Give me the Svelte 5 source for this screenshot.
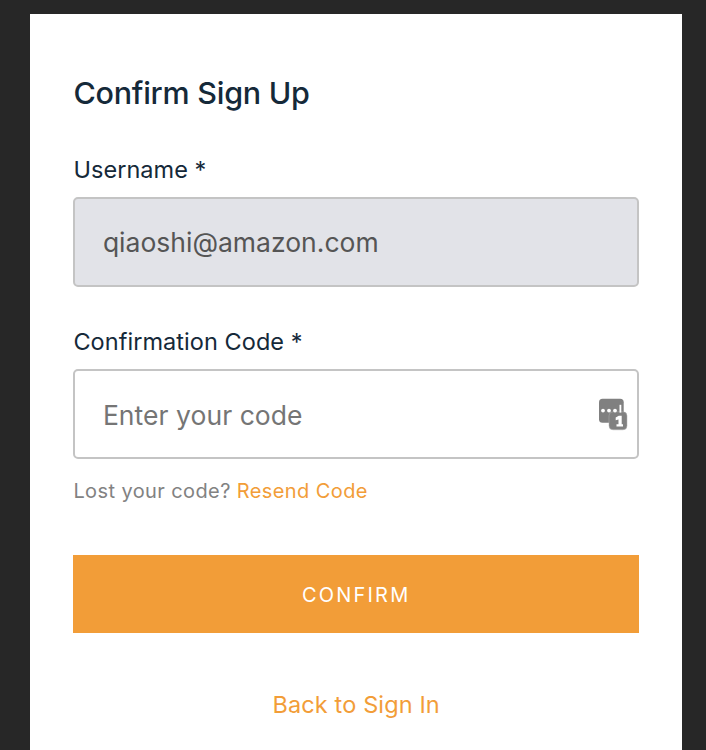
<script>
  let username = $state('qiaoshi@amazon.com');
  let code = $state('');
</script>

<main class="backdrop">
  <form class="card" onsubmit={(e) => e.preventDefault()}>
    <h1>Confirm Sign Up</h1>

    <label for="username">Username *</label>
    <div class="field disabled">
      <input id="username" bind:value={username} disabled />
    </div>

    <label for="code" class="second">Confirmation Code *</label>
    <div class="field">
      <input id="code" class="code" bind:value={code} placeholder="Enter your code" />
      <svg class="manager" width="30" height="34" viewBox="0 0 30 34" aria-hidden="true">
        <rect x="1" y="1.700" width="24.700" height="24" rx="3.500" fill="#808080" />
        <rect x="11" y="14.800" width="18" height="18" rx="4" fill="#808080" stroke="#b0b0b0" stroke-width="0.500" />
        <g fill="#fff">
          <circle cx="5" cy="13.600" r="1.900" />
          <circle cx="11" cy="13.600" r="1.900" />
          <circle cx="17" cy="13.600" r="1.900" />
          <rect x="21.500" y="7.800" width="1.800" height="7.800" />
          <path d="M20.800 18.800H23.700V27.200H25V29.500H18.500V27.200H20.500V22.500L17.700 23.300V20.600Z" />
        </g>
      </svg>
    </div>

    <p class="hint"><span>Lost your code?</span><a href="#resend">Resend Code</a></p>
    <button type="submit">CONFIRM</button>
    <a class="back" href="#signin">Back to Sign In</a>
  </form>
</main>

<style>
  :global(body) { margin: 0; overflow: hidden; background: #272727; }
  .backdrop {
    box-sizing: border-box;
    height: 750px;
    padding: 14px 24px 0 30px;
    background: #272727;
    font-family: Inter, "Liberation Sans", sans-serif;
  }
  .card {
    box-sizing: border-box;
    height: 736px;
    padding: 57px 43px 0 43.4px;
    display: flex;
    flex-direction: column;
    background: #fff;
    color: #152939;
  }
  h1 {
    margin: 0 0 40px;
    font-size: 30.5px;
    line-height: 44px;
    font-weight: 500;
    letter-spacing: -0.25px;
    white-space: nowrap;
  }
  label {
    height: 30px;
    font-size: 23.5px;
    line-height: 30px;
    letter-spacing: 0.05px;
    margin-bottom: 12px;
    white-space: nowrap;
  }
  .second { margin-top: 40px; }
  .field {
    box-sizing: border-box;
    height: 90px;
    display: flex;
    align-items: center;
    padding: 0 9px 0 27.5px;
    border: 2px solid #c4c4c4;
    border-radius: 5px;
  }
  .disabled { background: #e2e3e8; }
  input {
    flex: 1;
    min-width: 0;
    height: 60px;
    padding: 0;
    border: 0;
    outline: 0;
    background: transparent;
    font: 400 26.5px/60px Inter, "Liberation Sans", sans-serif;
    color: #555;
  }
  .code { margin-top: 2px; letter-spacing: 0.05px; }
  input::placeholder { color: #757575; opacity: 1; }
  .manager { flex: none; }
  .hint {
    margin: 17px 0 0;
    height: 30px;
    display: flex;
    gap: 6px;
    font-size: 20px;
    line-height: 30px;
    letter-spacing: 0.4px;
    color: #828282;
    white-space: nowrap;
  }
  a { color: #f29d38; text-decoration: none; }
  button {
    flex: none;
    height: 78px;
    margin: 49px 0 0;
    padding: 2px 0 0;
    border: 0;
    background: #f29d38;
    color: #fff;
    font: 400 20px/76px Inter, "Liberation Sans", sans-serif;
    letter-spacing: 2.2px;
  }
  .back {
    align-self: center;
    margin-top: 57px;
    font-size: 23.5px;
    line-height: 30px;
    letter-spacing: 0.12px;
    white-space: nowrap;
  }
</style>
